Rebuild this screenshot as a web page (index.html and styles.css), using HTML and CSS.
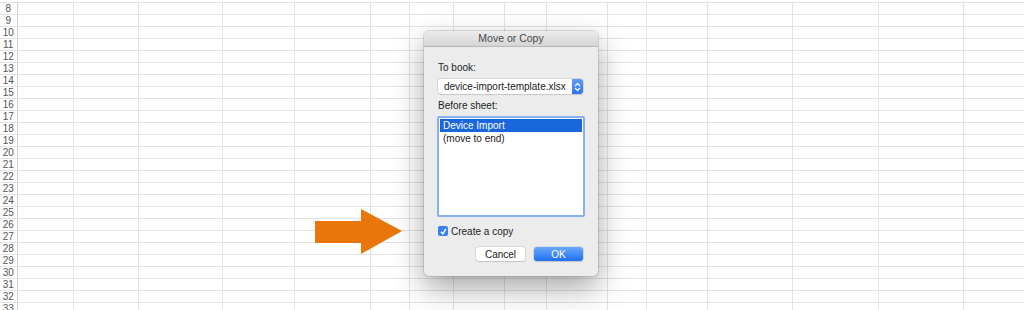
FILE: index.html
```html
<!DOCTYPE html>
<html lang="en">
<head>
    <meta charset="UTF-8">
    <title>Move or Copy</title>
    <link rel="stylesheet" href="styles.css">
</head>
<body>
    <div class="sheet">
        <table id="grid">
            <colgroup>
                <col style="width:17px"><col style="width:56px"><col style="width:65.5px"><col style="width:83.5px">
                <col style="width:72px"><col style="width:76px"><col style="width:39.5px"><col style="width:44px">
                <col style="width:51px"><col style="width:41.5px"><col style="width:61px"><col style="width:39px">
                <col style="width:61px"><col style="width:85px"><col style="width:86px"><col style="width:85px">
                <col style="width:61px">
            </colgroup>
            <tbody></tbody>
        </table>

        <!-- callout arrow pointing at the checkbox -->
        <svg class="arrow" width="90" height="46" viewBox="0 0 90 46">
            <polygon points="0,12 46,12 46,0 87,22 46,45 46,34 0,34" fill="#e8760b"/>
        </svg>

        <div class="dialog">
            <div class="dialog-title">Move or Copy</div>
            <div class="dialog-body">
                <div class="label">To book:</div>
                <div class="select">
                    <span class="select-text">device-import-template.xlsx</span>
                    <span class="select-btn">
                        <svg width="7" height="10" viewBox="0 0 7 10">
                            <path d="M1 4 L3.5 1.5 L6 4 M1 6 L3.5 8.5 L6 6" fill="none" stroke="#fff" stroke-width="1.2"/>
                        </svg>
                    </span>
                </div>
                <div class="label label-sheet">Before sheet:</div>
                <div class="list">
                    <div class="list-item selected">Device Import</div>
                    <div class="list-item">(move to end)</div>
                </div>
                <label class="check-row">
                    <span class="checkbox">
                        <svg width="9" height="9" viewBox="0 0 9 9">
                            <path d="M2 4.8 L3.8 6.8 L7 1.8" fill="none" stroke="#fff" stroke-width="1.4"/>
                        </svg>
                    </span>
                    Create a copy
                </label>
                <div class="buttons">
                    <button class="btn">Cancel</button>
                    <button class="btn btn-primary">OK</button>
                </div>
            </div>
        </div>
    </div>

    <script>
        // Build the spreadsheet rows 8..33
        const body = document.querySelector('#grid tbody');
        for (let r = 8; r <= 33; r++) {
            const row = body.insertRow();
            const head = row.insertCell(0);
            head.className = 'row-head';
            head.textContent = r;
            for (let c = 1; c < 17; c++) row.insertCell(c);
        }
    </script>
</body>
</html>
```

FILE: styles.css
```css
body {
    margin: 0;
    background: #ffffff;
    font-family: "Liberation Sans", Arial, sans-serif;
    overflow: hidden;
}
.sheet {
    position: relative;
    height: 310px;
    overflow: hidden;
}
table {
    border-collapse: collapse;
    table-layout: fixed;
    width: 1024px;
    margin-top: 2px;
}
td {
    height: 11px;
    padding: 0;
    border-right: 1px solid #e3e3e3;
    border-bottom: 1px solid #e3e3e3;
}
tr:first-child td {
    border-top: 1px solid #e3e3e3;
}
.row-head {
    font-size: 10px;
    line-height: 11px;
    color: #555555;
    text-align: center;
    border-right: 1px solid #d0d0d0;
}

.arrow {
    position: absolute;
    left: 315px;
    top: 209px;
}

.dialog {
    position: absolute;
    left: 424px;
    top: 31px;
    width: 174px;
    height: 245px;
    background: #ececec;
    border-radius: 5px;
    box-shadow: 0 0 0 1px rgba(0, 0, 0, 0.12), 0 12px 30px rgba(0, 0, 0, 0.35);
    overflow: hidden;
    font-size: 10px;
    color: #222222;
}
.dialog-title {
    height: 15px;
    line-height: 15px;
    text-align: center;
    color: #4a4a4a;
    font-size: 10.5px;
    background: linear-gradient(#ececec, #d5d5d5);
    border-bottom: 1px solid #b9b9b9;
}
.dialog-body {
    padding: 15px 14px 0 14px;
}
.label {
    height: 12px;
    line-height: 12px;
}
.select {
    display: flex;
    align-items: center;
    width: 145px;
    height: 15px;
    margin-top: 5px;
    background: #ffffff;
    border-radius: 3px;
    box-shadow: 0 0 0 0.5px #bdbdbd, 0 1px 1px rgba(0, 0, 0, 0.12);
    overflow: hidden;
}
.select-text {
    flex: 1;
    padding-left: 6px;
    line-height: 15px;
    white-space: nowrap;
}
.select-btn {
    display: flex;
    align-items: center;
    justify-content: center;
    width: 11px;
    height: 15px;
    background: linear-gradient(#5e9ff8, #2f74ee);
}
.label-sheet {
    margin-top: 6px;
}
.list {
    width: 142px;
    height: 95px;
    margin: 4px 0 0 -1px;
    padding: 1px;
    background: #ffffff;
    border: 2px solid #86aef0;
    border-radius: 2px;
}
.list-item {
    height: 14px;
    line-height: 14px;
    padding-left: 3px;
}
.list-item.selected {
    height: 13px;
    line-height: 13px;
    background: #1a66dc;
    color: #ffffff;
}
.check-row {
    display: flex;
    align-items: center;
    gap: 3px;
    margin-top: 8px;
    height: 12px;
}
.checkbox {
    display: flex;
    align-items: center;
    justify-content: center;
    width: 10px;
    height: 10px;
    border-radius: 2px;
    background: #3a82f3;
}
.buttons {
    display: flex;
    justify-content: flex-end;
    gap: 9px;
    margin-top: 10px;
    width: 145px;
}
.btn {
    width: 49px;
    height: 14px;
    padding: 0;
    border: none;
    border-radius: 3px;
    background: #ffffff;
    box-shadow: 0 0 0 0.5px #c2c2c2, 0 1px 1px rgba(0, 0, 0, 0.15);
    font-family: inherit;
    font-size: 10px;
    color: #222222;
}
.btn-primary {
    background: linear-gradient(#69a9fb, #1f6ff2);
    color: #ffffff;
}
```
